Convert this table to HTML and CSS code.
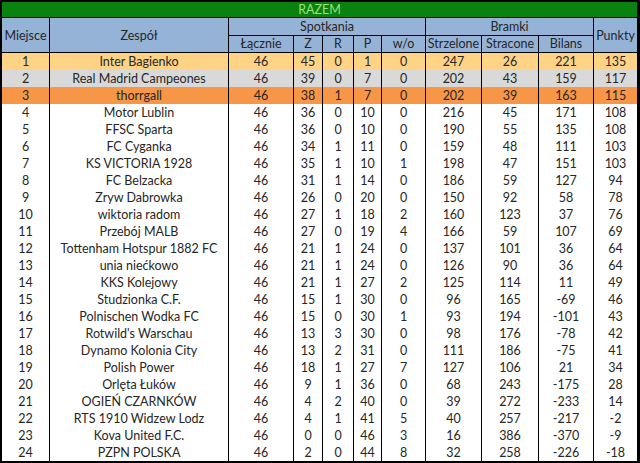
FILE: index.html
```html
<!DOCTYPE html>
<html lang="pl">
<head>
<meta charset="utf-8">
<title>RAZEM</title>
<link rel="stylesheet" href="styles.css">
</head>
<body>
<div class="standings">
  <div class="title">RAZEM</div>
  <div class="hd span2">Miejsce</div>
  <div class="hd span2">Zespół</div>
  <div class="hd group g-spot">Spotkania</div>
  <div class="hd group g-bram">Bramki</div>
  <div class="hd span2 last">Punkty</div>
  <div class="hd sub">Łącznie</div>
  <div class="hd sub">Z</div>
  <div class="hd sub">R</div>
  <div class="hd sub">P</div>
  <div class="hd sub">w/o</div>
  <div class="hd sub">Strzelone</div>
  <div class="hd sub">Stracone</div>
  <div class="hd sub">Bilans</div>

  <div class="row r-gold"><span>1</span><span>Inter Bagienko</span><span>46</span><span>45</span><span>0</span><span>1</span><span>0</span><span>247</span><span>26</span><span>221</span><span>135</span></div>
  <div class="row r-grey"><span>2</span><span>Real Madrid Campeones</span><span>46</span><span>39</span><span>0</span><span>7</span><span>0</span><span>202</span><span>43</span><span>159</span><span>117</span></div>
  <div class="row r-orange"><span>3</span><span>thorrgall</span><span>46</span><span>38</span><span>1</span><span>7</span><span>0</span><span>202</span><span>39</span><span>163</span><span>115</span></div>
  <div class="row"><span>4</span><span>Motor Lublin</span><span>46</span><span>36</span><span>0</span><span>10</span><span>0</span><span>216</span><span>45</span><span>171</span><span>108</span></div>
  <div class="row"><span>5</span><span>FFSC Sparta</span><span>46</span><span>36</span><span>0</span><span>10</span><span>0</span><span>190</span><span>55</span><span>135</span><span>108</span></div>
  <div class="row"><span>6</span><span>FC Cyganka</span><span>46</span><span>34</span><span>1</span><span>11</span><span>0</span><span>159</span><span>48</span><span>111</span><span>103</span></div>
  <div class="row"><span>7</span><span>KS VICTORIA 1928</span><span>46</span><span>35</span><span>1</span><span>10</span><span>1</span><span>198</span><span>47</span><span>151</span><span>103</span></div>
  <div class="row"><span>8</span><span>FC Belzacka</span><span>46</span><span>31</span><span>1</span><span>14</span><span>0</span><span>186</span><span>59</span><span>127</span><span>94</span></div>
  <div class="row"><span>9</span><span>Zryw Dabrowka</span><span>46</span><span>26</span><span>0</span><span>20</span><span>0</span><span>150</span><span>92</span><span>58</span><span>78</span></div>
  <div class="row"><span>10</span><span>wiktoria radom</span><span>46</span><span>27</span><span>1</span><span>18</span><span>2</span><span>160</span><span>123</span><span>37</span><span>76</span></div>
  <div class="row"><span>11</span><span>Przebój MALB</span><span>46</span><span>27</span><span>0</span><span>19</span><span>4</span><span>166</span><span>59</span><span>107</span><span>69</span></div>
  <div class="row"><span>12</span><span>Tottenham Hotspur 1882 FC</span><span>46</span><span>21</span><span>1</span><span>24</span><span>0</span><span>137</span><span>101</span><span>36</span><span>64</span></div>
  <div class="row"><span>13</span><span>unia niećkowo</span><span>46</span><span>21</span><span>1</span><span>24</span><span>0</span><span>126</span><span>90</span><span>36</span><span>64</span></div>
  <div class="row"><span>14</span><span>KKS Kolejowy</span><span>46</span><span>21</span><span>1</span><span>27</span><span>2</span><span>125</span><span>114</span><span>11</span><span>49</span></div>
  <div class="row"><span>15</span><span>Studzionka C.F.</span><span>46</span><span>15</span><span>1</span><span>30</span><span>0</span><span>96</span><span>165</span><span>-69</span><span>46</span></div>
  <div class="row"><span>16</span><span>Polnischen Wodka FC</span><span>46</span><span>15</span><span>0</span><span>30</span><span>1</span><span>93</span><span>194</span><span>-101</span><span>43</span></div>
  <div class="row"><span>17</span><span>Rotwild's Warschau</span><span>46</span><span>13</span><span>3</span><span>30</span><span>0</span><span>98</span><span>176</span><span>-78</span><span>42</span></div>
  <div class="row"><span>18</span><span>Dynamo Kolonia City</span><span>46</span><span>13</span><span>2</span><span>31</span><span>0</span><span>111</span><span>186</span><span>-75</span><span>41</span></div>
  <div class="row"><span>19</span><span>Polish Power</span><span>46</span><span>18</span><span>1</span><span>27</span><span>7</span><span>127</span><span>106</span><span>21</span><span>34</span></div>
  <div class="row"><span>20</span><span>Orlęta Łuków</span><span>46</span><span>9</span><span>1</span><span>36</span><span>0</span><span>68</span><span>243</span><span>-175</span><span>28</span></div>
  <div class="row"><span>21</span><span>OGIEŃ CZARNKÓW</span><span>46</span><span>4</span><span>2</span><span>40</span><span>0</span><span>39</span><span>272</span><span>-233</span><span>14</span></div>
  <div class="row"><span>22</span><span>RTS 1910 Widzew Lodz</span><span>46</span><span>4</span><span>1</span><span>41</span><span>5</span><span>40</span><span>257</span><span>-217</span><span>-2</span></div>
  <div class="row"><span>23</span><span>Kova United F.C.</span><span>46</span><span>0</span><span>0</span><span>46</span><span>3</span><span>16</span><span>386</span><span>-370</span><span>-9</span></div>
  <div class="row"><span>24</span><span>PZPN POLSKA</span><span>46</span><span>2</span><span>0</span><span>44</span><span>8</span><span>32</span><span>258</span><span>-226</span><span>-18</span></div>
</div>
</body>
</html>
```
FILE: styles.css
```css
* { box-sizing: border-box; }
html, body { margin: 0; padding: 0; background: #fff; }

.standings {
  width: 640px;
  height: 463px;
  border-style: solid;
  border-color: #000;
  border-width: 2px 3px 2px 2px;
  display: grid;
  grid-template-columns: 48px 179px 65px 29px 31px 28px 44px 56px 57px 55px 43px;
  grid-template-rows: 16px 18px 17px repeat(24, 17px);
  font-family: Lato, "Open Sans", sans-serif;
  font-size: 12.5px;
  color: #262626;
  text-align: center;
}

.title {
  grid-column: 1 / -1;
  background: #0a8210;
  color: #9be07a;
  border-bottom: 1px solid #000;
  line-height: 15px;
}

.hd {
  background: #95b3d7;
  border-right: 1px solid #000;
  border-bottom: 1px solid #000;
  line-height: 17px;
}
.hd.last { border-right: 0; }
.span2 {
  grid-row: span 2;
  display: flex;
  align-items: center;
  justify-content: center;
}
.g-spot { grid-column: 3 / 8; }
.g-bram { grid-column: 8 / 11; }
.sub { line-height: 16px; }

.row { display: contents; }
.row span {
  border-right: 1px solid #000;
  line-height: 17px;
  white-space: nowrap;
  overflow: hidden;
}
.row span:last-child { border-right: 0; }

.r-gold span { background: #ffd386; }
.r-grey span { background: #d9d9d9; }
.r-orange span { background: #f79646; }
```
